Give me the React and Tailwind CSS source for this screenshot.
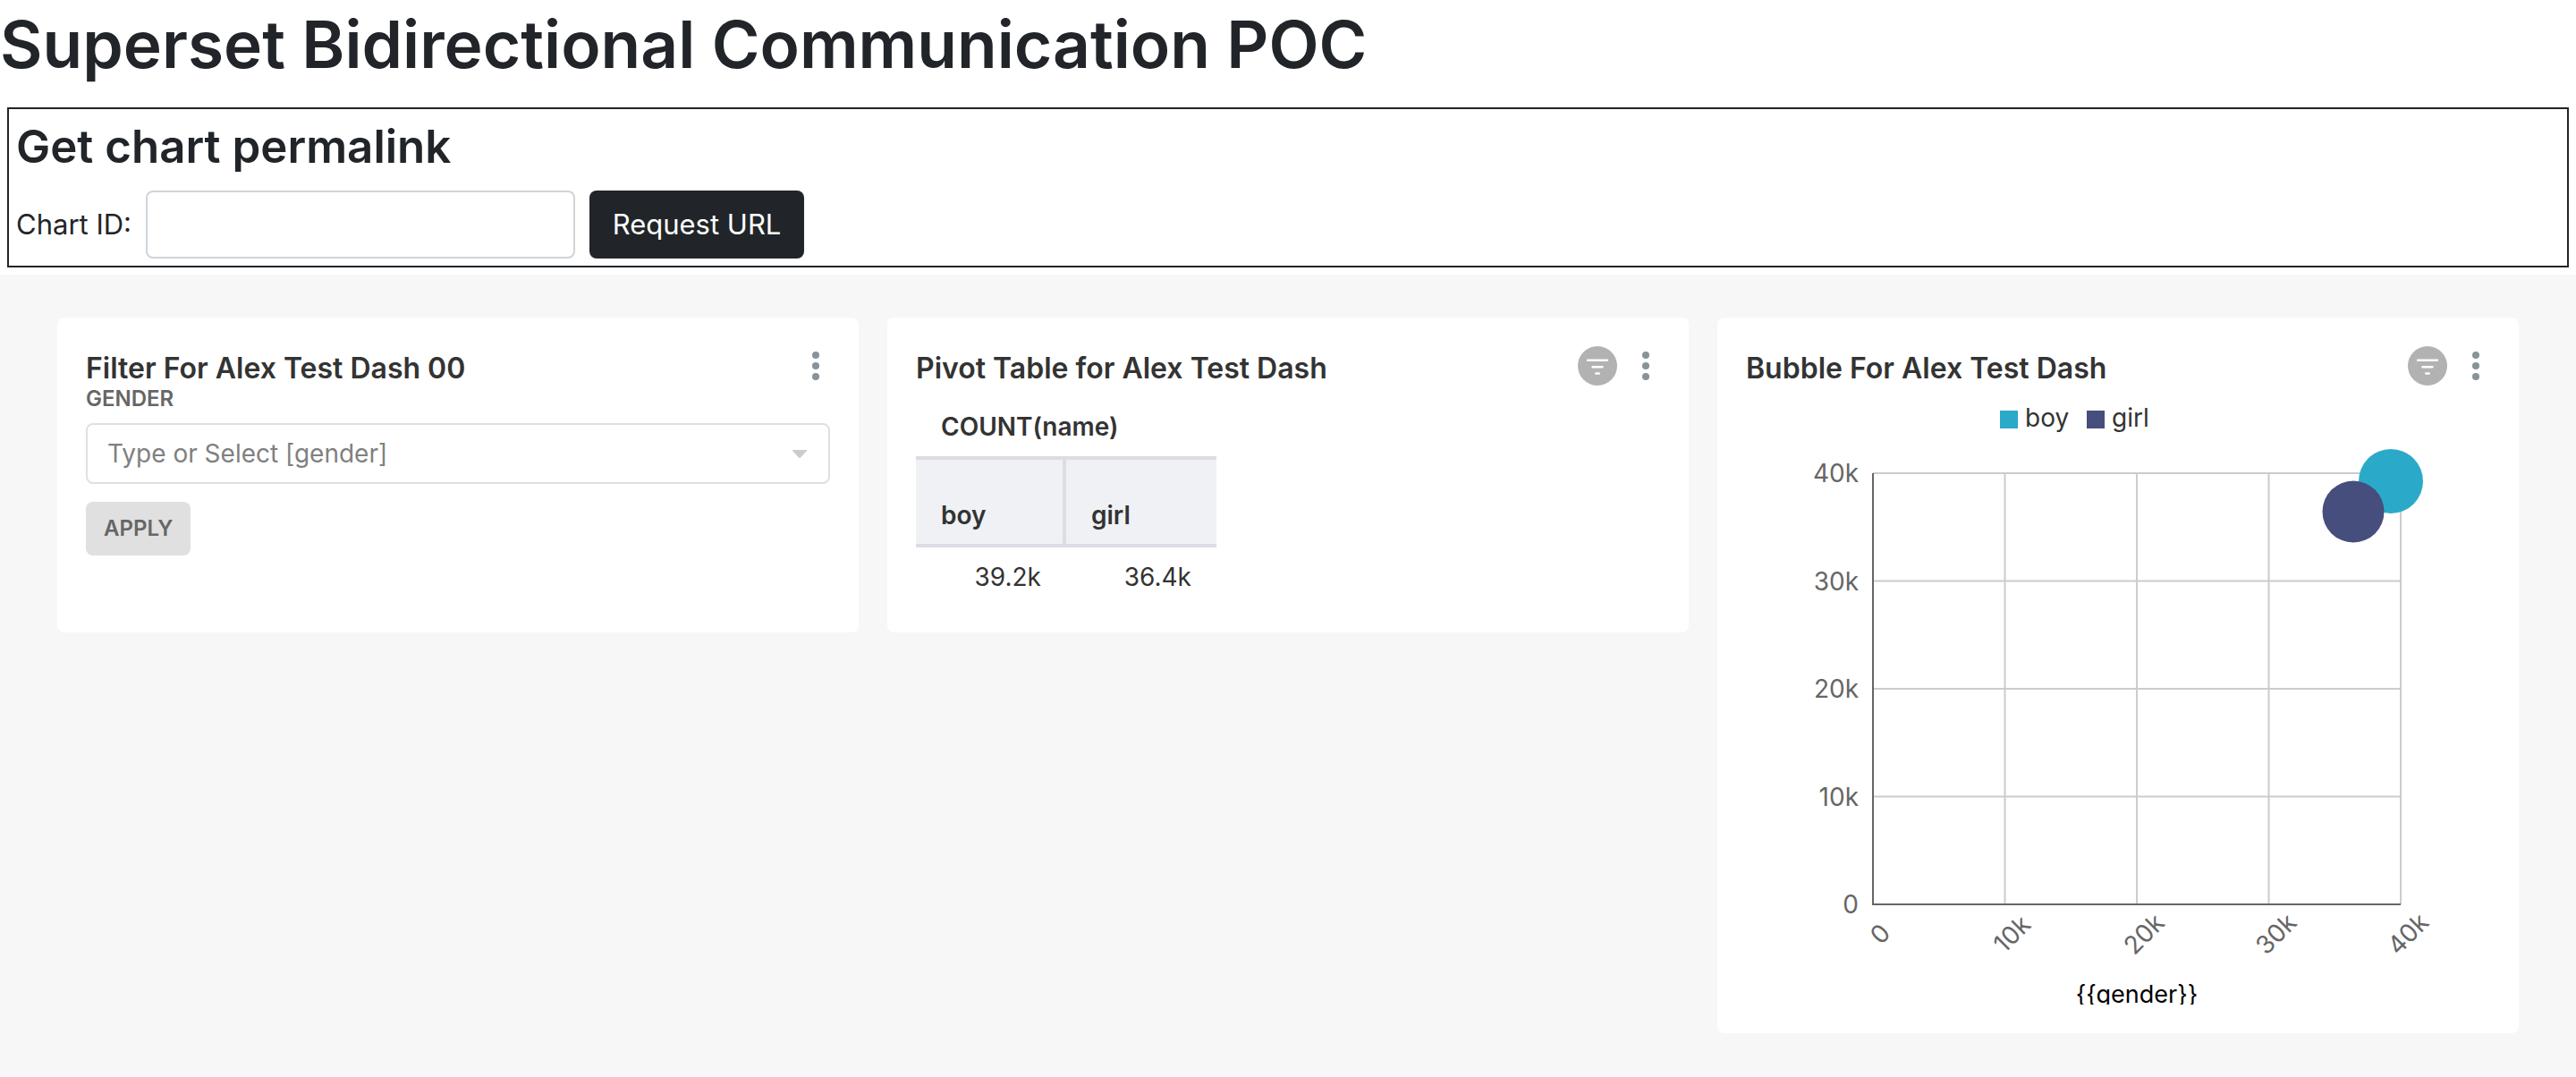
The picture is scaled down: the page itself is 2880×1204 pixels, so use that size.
const AXIS = ["0", "10k", "20k", "30k", "40k"];
const LEFT = 142;
const RIGHT = 732;
const TOP = 98;
const BOTTOM = 580;
const xAt = (i) => LEFT + ((RIGHT - LEFT) * i) / 4;
const yAt = (i) => BOTTOM - ((BOTTOM - TOP) * i) / 4;

function FilterBadge() {
  return (
    <svg viewBox="0 0 44 44" className="size-11" role="img" aria-label="Applied filters">
      <circle cx="22" cy="22" r="22" fill="#b2b2b2" />
      <g stroke="#fff" strokeWidth="2.4" strokeLinecap="round">
        <path d="M11 15.7h22M16.5 23.3h11M20.3 30.5h3.4" />
      </g>
    </svg>
  );
}

function MoreButton() {
  return (
    <button type="button" aria-label="More options" className="flex h-11 w-8 items-center justify-center">
      <svg viewBox="0 0 8 32" className="h-8 w-2" fill="#879399">
        <circle cx="4" cy="4" r="4" />
        <circle cx="4" cy="16" r="4" />
        <circle cx="4" cy="28" r="4" />
      </svg>
    </button>
  );
}

function Card({ title, filtered, children }) {
  return (
    <section className="min-h-[352px] rounded-lg bg-white p-8">
      <header className="flex h-11 items-start justify-between">
        <h3 className="text-[32px] leading-[50px] font-semibold text-[#333333]">{title}</h3>
        <div className="flex items-center gap-4">
          {filtered && <FilterBadge />}
          <MoreButton />
        </div>
      </header>
      {children}
    </section>
  );
}

function FilterBox() {
  return (
    <form onSubmit={(e) => e.preventDefault()}>
      <label htmlFor="gender" className="block pb-3 text-[24px] leading-[30px] font-semibold text-[#666666]">
        GENDER
      </label>
      <div className="relative">
        <select
          id="gender"
          defaultValue=""
          className="h-[68px] w-full appearance-none rounded-lg border-2 border-[#e0e0e0] bg-white px-[22px] text-[28px] text-[#808080]"
        >
          <option value="">Type or Select [gender]</option>
          <option value="boy">boy</option>
          <option value="girl">girl</option>
        </select>
        <svg viewBox="0 0 16 9" className="pointer-events-none absolute top-[30px] right-[26px] h-[9px] w-4" fill="#cccccc">
          <path d="M0 0h16v1L9 8.500q-1 1-2 0L0 1z" />
        </svg>
      </div>
      <button type="submit" className="mt-5 h-[60px] rounded-lg bg-[#e0e0e0] px-5 text-[24px] font-semibold text-[#666666]">
        APPLY
      </button>
    </form>
  );
}

function PivotTable() {
  return (
    <table className="w-[336px] table-fixed border-separate border-spacing-0 text-[28px] leading-9 text-[#333333]">
      <thead>
        <tr>
          <th colSpan={2} scope="colgroup" className="px-7 pt-7 pb-[15px] text-left font-semibold">
            COUNT(name)
          </th>
        </tr>
        <tr className="bg-[#f0f1f4]">
          <th scope="col" className="border-y-4 border-r-4 border-[#dcdde4] px-7 pt-11 pb-[14px] text-left font-semibold">boy</th>
          <th scope="col" className="border-y-4 border-[#dcdde4] px-7 pt-11 pb-[14px] text-left font-semibold">girl</th>
        </tr>
      </thead>
      <tbody>
        <tr>
          <td className="px-7 pt-[15px] text-right">39.2k</td>
          <td className="px-7 pt-[15px] text-right">36.4k</td>
        </tr>
      </tbody>
    </table>
  );
}

function BubbleChart() {
  return (
    <svg viewBox="0 0 832 692" className="block h-auto w-full overflow-hidden text-[28px]" role="img" aria-label="Bubble chart by gender">
      <rect x="284" y="28" width="20" height="20" fill="#2ba9c8" />
      <text x="312" y="46" fill="#333333">boy</text>
      <rect x="381" y="28" width="20" height="20" fill="#454e7c" />
      <text x="409" y="46" fill="#333333">girl</text>

      {[1, 2, 3, 4].map((i) => (
        <g key={i} stroke="#cccccc" strokeWidth="2">
          <path d={`M${LEFT} ${yAt(i)}H${RIGHT}`} />
          <path d={`M${xAt(i)} ${TOP}V${BOTTOM}`} />
        </g>
      ))}
      <path d={`M${LEFT} ${TOP}V${BOTTOM}H${RIGHT}`} fill="none" stroke="#666666" strokeWidth="2" />

      <g fill="#666666">
        {AXIS.map((label, i) => (
          <text key={label} x="126" y={yAt(i) + 10} textAnchor="end">{label}</text>
        ))}
        {AXIS.map((label, i) => (
          <text key={label} textAnchor="middle" transform={`translate(${xAt(i) + 15} 620) rotate(-45)`}>{label}</text>
        ))}
      </g>

      <circle cx="721" cy="107" r="36" fill="#2ba9c8" />
      <circle cx="679" cy="141" r="34.500" fill="#454e7c" />
      <text x="437" y="690" textAnchor="middle" fill="#000" className="text-[27px]">{"{{gender}}"}</text>
    </svg>
  );
}

export default function App() {
  return (
    <div className="flex min-h-screen flex-col bg-white font-['Inter',sans-serif] text-[#212529]">
      <h1 className="mb-3 text-[73px] leading-[100px] font-semibold">Superset Bidirectional Communication POC</h1>
      <form className="m-2 border-2 border-[#212529] p-2" onSubmit={(e) => e.preventDefault()}>
        <h2 className="mb-4 text-[51px] leading-[67px] font-semibold">Get chart permalink</h2>
        <div className="flex items-center gap-4">
          <label htmlFor="chart-id" className="text-[31px]">Chart ID:</label>
          <input id="chart-id" type="text" className="h-[76px] w-[480px] rounded-lg border-2 border-[#ced4da] px-6 text-[31px]" />
          <button type="submit" className="h-[76px] w-60 rounded-lg bg-[#212529] text-[31px] text-white">
            Request URL
          </button>
        </div>
      </form>
      <main className="grid flex-1 grid-cols-3 items-start gap-8 bg-[#f7f7f7] px-16 py-12">
        <Card title="Filter For Alex Test Dash 00">
          <FilterBox />
        </Card>
        <Card title="Pivot Table for Alex Test Dash" filtered>
          <PivotTable />
        </Card>
        <Card title="Bubble For Alex Test Dash" filtered>
          <BubbleChart />
        </Card>
      </main>
    </div>
  );
}
